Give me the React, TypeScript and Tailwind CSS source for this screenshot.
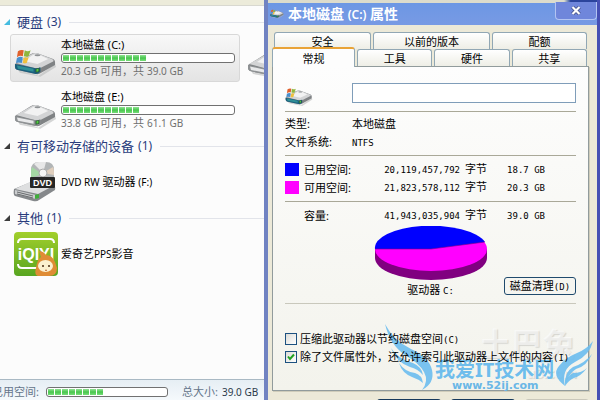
import { useState } from 'react';
import type { ReactNode } from 'react';
import clsx from 'clsx';

const cells = (count: number) => Array.from({ length: count }, (_, i) => i);

function DriveIcon({ system = false, className }: { system?: boolean; className?: string }) {
  return (
    <svg viewBox="0 0 44 28" className={className} aria-hidden="true">
      <path d="M3 19 L25 27 L42 15 L43 18 L27 28 L6 24Z" fill="#b9babb" opacity=".6" />
      <path d="M1 15 L17 5 Q20 3 24 4 L40 10 Q42 11 42 13 L42 16 L26 25 Q24 26 21 25 L3 21 Q1 20 1 18Z" fill="#7f8284" />
      <path d="M2 14 L18 5 Q21 3 24 4 L39 10 Q42 12 39 13 L27 19 Q24 20 21 19Z" fill="#d3d4d5" />
      <path d="M10 12 L19 6 Q23 4 27 6 L35 10 L24 15Z" fill="#f2f2f2" />
      <ellipse cx="24" cy="6" rx="3" ry="1" fill="#8f9294" />
      <path d="M1 15 L21 19 Q24 20 27 18 L27 23 Q24 26 21 25 L3 21 Q1 20 1 18Z" fill={system ? '#1b5f7d' : '#8f9294'} />
      <path d="M3 16.500 L20 20 L20 23 L4 20Z" fill={system ? '#2f8f96' : '#e8e9ea'} />
      <path d="M22 20 L26 19 L26 23 L22 24Z" fill="#2c5a36" />
      <path d="M23 20.500 L25 20 L25 22.500 L23 23Z" fill="#52cf3f" />
      {system && (
        <g>
          <path d="M4 2 Q7 0 10 1 L9 7 Q6 6 3 8Z" fill="#e0602c" />
          <path d="M11 1 Q14 3 17 1 L15 7 Q13 8 10 7Z" fill="#8fb63d" />
          <path d="M3 9 Q6 7 9 8 L8 14 Q5 13 2 14Z" fill="#4a8fcc" />
          <path d="M10 8 Q12 9 15 8 L13 14 Q11 15 9 14Z" fill="#f0c13c" />
        </g>
      )}
    </svg>
  );
}

function DvdIcon() {
  return (
    <svg viewBox="0 0 44 42" className="h-[42px] w-11" aria-hidden="true">
      <path d="M1 28 L18 21 L40 24 Q43 25 42 29 L26 39 Q24 41 20 40 L2 35 Q0 34 1 28Z" fill="#85888b" />
      <path d="M2 28 L19 20 L40 25 L25 33Z" fill="#dedfe0" />
      <path d="M2 29 L23 34 L23 38 L2 33Z" fill="#cbcdcf" />
      <path d="M4 31 L20 35 M4 33 L20 37" stroke="#686b6d" strokeWidth="1" />
      <path d="M22 34 L26 33 L26 37 L22 38Z" fill="#3fae3a" />
      <path d="M18 17 V9 Q18 1 26 1 H33 Q41 1 41 9 V17Z" fill="#b2b5b6" />
      <path d="M29 13 L19 6 Q18 8 18 12 L18 17Z" fill="#a5d8a4" />
      <path d="M30 12 L33 1 H26 Q23 1 21 3Z" fill="#e8e8e8" />
      <path d="M30 12 L40 6 Q41 8 41 14Z" fill="#e0cfbe" />
      <circle cx="30" cy="12" r="4" fill="#f5f5f5" stroke="#aaa" strokeWidth="1" />
      <rect x="17" y="16" width="25" height="11" rx="1" fill="#262626" />
      <text x="29.500" y="25" textAnchor="middle" fontSize="9" fontWeight="bold" fill="#fff" fontFamily="Liberation Sans, sans-serif">
        DVD
      </text>
    </svg>
  );
}

function PpsIcon() {
  return (
    <svg viewBox="0 0 44 44" className="size-11" aria-hidden="true">
      <defs>
        <linearGradient id="pps" x1="0" y1="0" x2="0" y2="1">
          <stop offset="0" stopColor="#a2cf2b" />
          <stop offset="1" stopColor="#58a521" />
        </linearGradient>
      </defs>
      <rect width="44" height="44" rx="4" fill="url(#pps)" />
      <path d="M4 11 Q4 7 8 7 H36 Q40 7 40 11 M4 32 Q4 36 8 36 H24" fill="none" stroke="#fff" strokeWidth="2" />
      <text x="22" y="28" textAnchor="middle" fontSize="16" fontWeight="bold" fill="#fff" fontFamily="Liberation Sans, sans-serif">
        iQIYI
      </text>
      <path d="M22 36 Q23 28 27 25 L25 19 Q29 19 32 23 Q38 23 41 30 L43 36 Q43 44 35 44 H24 Q20 43 22 36Z" fill="#df8c35" />
      <ellipse cx="31.500" cy="34" rx="7.500" ry="6" fill="#fbf0cf" />
      <circle cx="29" cy="34" r="1" fill="#4a2b12" />
      <circle cx="35" cy="34" r="1" fill="#4a2b12" />
      <path d="M31 38 Q32 39 33 38" stroke="#c0632a" fill="none" />
    </svg>
  );
}

function UsageBar({ filled, className }: { filled: number; className?: string }) {
  return (
    <div className={clsx('flex gap-px overflow-hidden rounded-[3px] border border-[#717171] bg-white p-px', className)}>
      {cells(filled).map((i) => (
        <span key={i} className="w-1.5 shrink-0 bg-linear-to-b from-[#8fe292] via-[#45c64c] to-[#76dc79]" />
      ))}
    </div>
  );
}

function GroupHeading({ title, count, open = false }: { title: string; count: number; open?: boolean }) {
  return (
    <h2 className="flex h-6 items-center pl-1 text-[13px] leading-none text-[#2a3c7c]">
      <svg viewBox="0 0 7 7" className="mr-1.5 size-[7px]" aria-hidden="true">
        <path d="M6 0 V6 H0Z" fill={open ? '#45bce0' : '#3c3c3c'} />
      </svg>
      {title}
      <span className="ml-1 text-[12px]">({count})</span>
      <span className="ml-2 h-px flex-1 bg-[#e2e4ea]" />
    </h2>
  );
}

interface DriveProps {
  name: string;
  free: string;
  total: string;
  filled: number;
  system?: boolean;
  selected?: boolean;
}

function DriveTile({ name, free, total, filled, system, selected }: DriveProps) {
  return (
    <div
      className={clsx(
        'ml-2.5 flex h-12 w-[230px] shrink-0 items-center gap-1 rounded-[3px] border pl-[3px]',
        selected ? 'border-[#d8d8d8] bg-linear-to-b from-[#f8f8f8] to-[#e4e4e4]' : 'border-transparent',
      )}
    >
      <DriveIcon system={system} className="mb-1 h-7 w-[43px] shrink-0 self-end" />
      <div className="w-[174px] text-[11px] leading-4">
        <p className="text-black">{name}</p>
        <UsageBar filled={filled} className="h-2.5" />
        <p className="text-[#707070]">
          <span className="text-[10px]">{free} GB</span> 可用，共 <span className="text-[10px]">{total} GB</span>
        </p>
      </div>
    </div>
  );
}

function Explorer() {
  return (
    <main className="flex w-[44%] shrink-0 flex-col overflow-hidden bg-[#fcfcfc]">
      <div className="h-1.5 shrink-0 border-b border-[#d8d8d0] bg-[#ecebda]" />
      <div className="flex-1 pt-1">
        <GroupHeading title="硬盘" count={3} open />
        <div className="flex items-center gap-[7px] overflow-hidden">
          <DriveTile name="本地磁盘 (C:)" free="20.3" total="39.0" filled={12} system selected />
          <DriveIcon className="mb-1 h-7 w-11 shrink-0 self-end" />
        </div>
        <div className="mt-1">
          <DriveTile name="本地磁盘 (E:)" free="33.8" total="61.1" filled={11} />
        </div>
        <GroupHeading title="有可移动存储的设备" count={1} />
        <div className="flex h-12 items-center gap-1 pl-[13px] text-[11px]">
          <DvdIcon />
          <p>
            <span className="text-[10px]">DVD RW</span> 驱动器 <span className="text-[10px]">(F:)</span>
          </p>
        </div>
        <GroupHeading title="其他" count={1} />
        <div className="flex h-12 items-center gap-[3px] pl-3.5 text-[11px]">
          <PpsIcon />
          <p>
            爱奇艺<span className="text-[10px]">PPS</span>影音
          </p>
        </div>
      </div>
      <footer className="flex h-[21px] shrink-0 items-center border-t border-[#a9b9c4] bg-linear-to-b from-[#e6eef4] to-[#f5f9fc] pt-1 text-[11px] whitespace-nowrap text-[#64758a]">
        <span className="-ml-2 w-[54px] shrink-0">已用空间:</span>
        <UsageBar filled={8} className="h-2.5 w-[122px] shrink-0" />
        <span className="ml-3.5">总大小:</span>
        <span className="ml-1 text-[10px] text-[#2c3a4c]">39.0 GB</span>
      </footer>
    </main>
  );
}

function Tab({ children, active = false, className }: { children: ReactNode; active?: boolean; className?: string }) {
  return (
    <button
      type="button"
      role="tab"
      aria-selected={active}
      className={clsx(
        'rounded-t-[3px] border border-b-0 border-[#91a7b4] text-[11px] leading-none',
        active
          ? 'relative z-10 -mt-0.5 -mb-px h-5 border-t-2 border-t-[#e9a336] bg-[#fdfdfd]'
          : 'h-[17px] bg-linear-to-b from-white to-[#eeeee6]',
        className,
      )}
    >
      {children}
    </button>
  );
}

function Mono({ children }: { children: ReactNode }) {
  return <span className="font-['DejaVu_Sans_Mono','Noto_Sans_CJK_SC',monospace] text-[9px]">{children}</span>;
}

function SpaceRow({ label, bytes, size, swatch }: { label: string; bytes: string; size: string; swatch?: string }) {
  return (
    <tr className="h-[18px]">
      <td className="w-[19px]">{swatch && <span className={clsx('block h-[13px] w-3.5', swatch)} />}</td>
      <th scope="row" className="text-left font-normal">{label}:</th>
      <td className="w-[120px] text-right">
        <Mono>{bytes}</Mono>
        <span className="ml-[5px]">字节</span>
      </td>
      <td className="w-[58px] text-right">
        <Mono>{size}</Mono>
      </td>
      <td className="w-[31px]" />
    </tr>
  );
}

function PieChart() {
  return (
    <svg viewBox="0 0 114 56" className="h-14 w-[114px]" role="img" aria-label="驱动器 C:">
      <path d="M1 23 V32 A56 22 0 0 0 113 32 V23Z" fill="#800080" />
      <ellipse cx="57" cy="23" rx="56" ry="22" fill="#ff00ff" />
      <path d="M57 23 H1 A56 22 0 0 1 111 16Z" fill="#0000ff" />
      <path d="M1 23 H57 L111 16" fill="none" stroke="#800080" strokeWidth=".6" />
    </svg>
  );
}

interface OptionProps {
  label: string;
  shortcut: string;
  defaultChecked?: boolean;
}

function Option({ label, shortcut, defaultChecked = false }: OptionProps) {
  const [checked, setChecked] = useState(defaultChecked);

  return (
    <label className="flex h-[18px] items-center gap-[3px] whitespace-nowrap">
      <span className="relative block size-3 shrink-0">
        <input
          type="checkbox"
          checked={checked}
          onChange={(e) => setChecked(e.target.checked)}
          className="block size-3 appearance-none border border-[#1c5180] bg-linear-to-br from-[#dcdcd7] to-white"
        />
        {checked && (
          <svg viewBox="0 0 12 12" className="pointer-events-none absolute inset-0" aria-hidden="true">
            <path d="M3 5.500 L5 8 L9 3.500" fill="none" stroke="#21a121" strokeWidth="2" />
          </svg>
        )}
      </span>
      <span className="relative z-30">
        {label}
        <Mono>({shortcut})</Mono>
      </span>
    </label>
  );
}

function Watermark() {
  return (
    <div className="pointer-events-none absolute right-0 bottom-0 z-20 h-[76px] w-[214px]">
      <p className="absolute top-1 right-[22px] text-[32px] leading-none font-bold text-white/60 [text-shadow:1px_1px_1px_#d5d5d0]">
        土巴兔
      </p>
      <p className="absolute top-[42px] right-[20px] text-[14px] leading-none font-bold text-white/60 [text-shadow:1px_1px_1px_#d5d5d0]">
        u8.com
      </p>
      <svg viewBox="0 0 214 76" className="absolute inset-0 size-full" aria-hidden="true">
        <g fill="#6bbdee" fillOpacity=".9">
          <path d="M2 0 Q10 16 28 25 Q46 33 49 46 Q52 59 39 66 Q46 57 41 48 Q36 39 22 31 Q7 21 2 0Z" />
          <path d="M8 24 Q15 35 30 39 Q39 43 40 51 Q35 45 27 43 Q13 38 8 24Z" />
          <path d="M16 39 Q22 48 32 49 Q39 51 40 59 Q35 55 29 53 Q19 49 16 39Z" />
          <path d="M210 17 Q207 31 192 38 Q178 45 182 62 Q168 51 176 42 Q182 34 194 29 Q204 25 210 17Z" />
          <path d="M209 30 Q204 42 193 45 Q185 50 182 62 Q181 48 190 43 Q202 39 209 30Z" />
          <path d="M204 44 Q198 52 191 54 Q186 56 182 62 Q183 52 190 49 Q199 49 204 44Z" />
        </g>
      </svg>
      <p className="absolute top-[36px] left-[52px] text-[20px] leading-none font-bold whitespace-nowrap text-[#5cb6ec]/90">
        我爱IT技术网
      </p>
      <p className="absolute top-[56px] left-[69px] font-['DejaVu_Sans'] text-[11px] leading-none font-bold text-[#6ab7e6]">
        www.52ij.com
      </p>
    </div>
  );
}

function PropertiesDialog() {
  return (
    <section
      role="dialog"
      aria-label="本地磁盘 (C:) 属性"
      className="relative flex min-w-0 flex-1 flex-col overflow-hidden border-r-[3px] border-l-4 border-r-[#4650b4] border-l-[#7183c2] bg-[#ece9d8] text-[11px] text-black"
    >
      <div className="h-[3px] shrink-0 bg-linear-to-r from-[#dcdccc] from-90% to-[#2b449c] to-92%" />
      <header className="-mx-1 flex h-[22px] shrink-0 items-center rounded-t-[4px] bg-linear-to-b from-[#6c97e4] to-[#789ae4] pr-1 pl-1 text-white">
        <DriveIcon system className="ml-0.5 h-2.5 w-3.5" />
        <h1 className="ml-1 text-[14px] leading-none font-semibold">
          本地磁盘 <span className="text-[12px]">(C:)</span> 属性
        </h1>
        <button
          type="button"
          aria-label="关闭"
          className="-mt-1.5 ml-auto flex h-[18px] w-[42px] items-center justify-center rounded-b-[4px] border border-t-0 border-[#b3c4f2] bg-[#6f86db]"
        >
          <svg viewBox="0 0 10 9" className="h-[9px] w-2.5" aria-hidden="true">
            <path d="M1.500 1 L8.500 8 M8.500 1 L1.500 8" stroke="#3e4a80" strokeWidth="3.600" />
            <path d="M1.500 1 L8.500 8 M8.500 1 L1.500 8" stroke="#fff" strokeWidth="2.200" />
          </svg>
        </button>
      </header>
      <div className="flex flex-1 flex-col pt-[7px] pr-2 pl-1">
        <div role="tablist">
          <div className="flex gap-0.5 px-0.5">
            <Tab className="w-[97px]">安全</Tab>
            <Tab className="flex-1">以前的版本</Tab>
            <Tab className="w-[95px]">配额</Tab>
          </div>
          <div className="flex gap-0.5 pr-0.5">
            <Tab active className="w-[83px]">常规</Tab>
            <Tab className="flex-1">工具</Tab>
            <Tab className="flex-1">硬件</Tab>
            <Tab className="flex-1">共享</Tab>
          </div>
        </div>
        <div
          role="tabpanel"
          className="flex shrink-0 flex-col border border-[#919b9c] bg-linear-to-b from-[#fdfdfd] to-[#f3f3ec] px-3 pb-6 shadow-[1px_1px_0_#cfccba]"
        >
          <div className="flex h-[45px] items-end border-b border-[#a9a898] pb-2">
            <DriveIcon system className="-mb-1 h-5 w-7" />
            <input
              type="text"
              aria-label="卷标"
              className="ml-[39px] h-5 min-w-0 flex-1 border border-[#7f9db9] bg-white px-1 outline-none"
            />
          </div>
          <dl className="grid h-11 grid-cols-[67px_1fr] content-center border-b border-[#a9a898] leading-[18px]">
            <dt>类型:</dt>
            <dd>本地磁盘</dd>
            <dt className="whitespace-nowrap">文件系统:</dt>
            <dd>
              <Mono>NTFS</Mono>
            </dd>
          </dl>
          <div className="h-[46px] border-b border-[#a9a898] pt-1">
            <table className="w-full table-fixed border-collapse leading-none">
              <tbody>
                <SpaceRow label="已用空间" bytes="20,119,457,792" size="18.7 GB" swatch="bg-[#0000ff]" />
                <SpaceRow label="可用空间" bytes="21,823,578,112" size="20.3 GB" swatch="bg-[#ff00ff]" />
              </tbody>
            </table>
          </div>
          <table className="mt-1 w-full table-fixed border-collapse leading-none">
            <tbody>
              <SpaceRow label="容量" bytes="41,943,035,904" size="39.0 GB" />
            </tbody>
          </table>
          <div className="grid h-20 grid-cols-[1fr_114px_1fr] items-end border-b border-[#c9c8bc] pb-1">
            <figure className="col-start-2 flex flex-col items-center">
              <PieChart />
              <figcaption className="leading-4">
                驱动器 <Mono>C:</Mono>
              </figcaption>
            </figure>
            <button
              type="button"
              className="mb-1 h-[18px] w-[72px] justify-self-end rounded-[3px] border border-[#1f4a6d] bg-[#f5f5f0] leading-none whitespace-nowrap"
            >
              磁盘清理<Mono>(D)</Mono>
            </button>
          </div>
          <div className="pt-[26px]">
            <Option label="压缩此驱动器以节约磁盘空间" shortcut="C" />
            <Option label="除了文件属性外，还允许索引此驱动器上文件的内容" shortcut="I" defaultChecked />
          </div>
        </div>
        <div className="mt-2 flex h-6 shrink-0 justify-end gap-2.5">
          <button type="button" aria-label="确定" className="w-16 rounded-[3px] border-2 border-[#173a5c] bg-white" />
          <button type="button" aria-label="取消" className="w-16 rounded-[3px] border-2 border-[#173a5c] bg-white" />
          <button type="button" aria-label="应用" disabled className="w-16 rounded-[3px] border border-[#c9c7ba]" />
        </div>
      </div>
      <Watermark />
    </section>
  );
}

export default function App() {
  return (
    <div className="flex h-screen overflow-hidden bg-white font-['Noto_Sans','Noto_Sans_CJK_SC',sans-serif]">
      <Explorer />
      <PropertiesDialog />
    </div>
  );
}
